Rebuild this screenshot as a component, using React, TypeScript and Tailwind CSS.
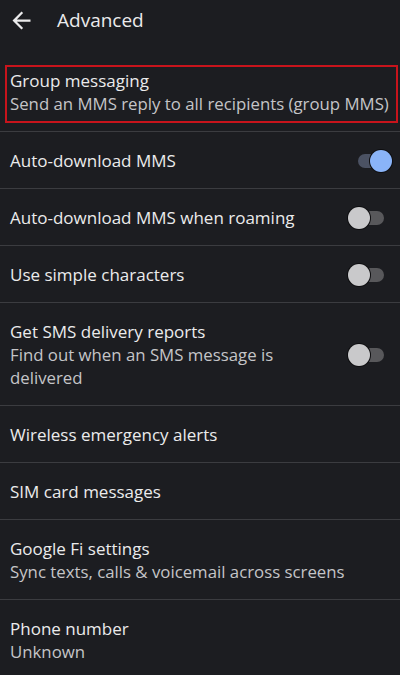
import { useState } from "react";

interface SettingItem {
  title: string;
  summary?: string;
  toggle?: boolean;
}

const items: SettingItem[] = [
  { title: "Auto-download MMS", toggle: true },
  { title: "Auto-download MMS when roaming", toggle: false },
  { title: "Use simple characters", toggle: false },
  {
    title: "Get SMS delivery reports",
    summary: "Find out when an SMS message is delivered",
    toggle: false,
  },
  { title: "Wireless emergency alerts" },
  { title: "SIM card messages" },
  {
    title: "Google Fi settings",
    summary: "Sync texts, calls & voicemail across screens",
  },
  { title: "Phone number", summary: "Unknown" },
];

function Toggle({ initial }: { initial: boolean }) {
  const [on, setOn] = useState(initial);

  return (
    <button
      onClick={() => setOn(!on)}
      className="relative w-[44px] h-[22px] shrink-0"
      aria-pressed={on}
    >
      <span
        className={`absolute left-[10px] top-[4px] w-[26px] h-[14px] rounded-full ${
          on ? "bg-[#4b5263]" : "bg-[#58585b]"
        }`}
      />
      <span
        className={`absolute top-0 w-[22px] h-[22px] rounded-full ring-1 ring-[#0e0e10] ${
          on ? "left-[22px] bg-[#8ab4f8]" : "left-0 bg-[#c9c9cb]"
        }`}
      />
    </button>
  );
}

export default function App() {
  return (
    <div
      className="w-[400px] min-h-[675px] bg-[#1c1d21] text-[#ebebec]"
      style={{ fontFamily: "'Open Sans', Roboto, sans-serif" }}
    >
      {/* Top bar */}
      <div className="h-10 flex items-center">
        <svg
          viewBox="0 0 24 24"
          className="w-[27px] h-[27px] ml-[8px] fill-[#ebebec]"
        >
          <path d="M20 11H7.83l5.59-5.59L12 4l-8 8 8 8 1.41-1.41L7.83 13H20v-2z" />
        </svg>
        <span className="ml-[22px] text-[19px] leading-none">Advanced</span>
      </div>

      {/* Group messaging, outlined */}
      <div className="pt-[25px] pb-[8px] pl-[5px] pr-[2px] border-b border-[#3b3c40]">
        <div className="border-2 border-[#c8141c] pl-[3px] pt-[2px] pb-[6px]">
          <div className="text-[17px] leading-[23px] font-medium">
            Group messaging
          </div>
          <div className="text-[16.8px] leading-[23px] text-[#c5c5c8] whitespace-nowrap">
            Send an MMS reply to all recipients (group MMS)
          </div>
        </div>
      </div>

      {items.map((item, index) => (
        <div
          key={index}
          className={`flex items-center pl-[10px] pr-[8px] pt-[17px] pb-[16px] ${
            index < items.length - 1 ? "border-b border-[#3b3c40]" : ""
          }`}
        >
          <div className="flex-1 min-w-0 pr-4">
            <div className="text-[17px] leading-[23px] font-medium">
              {item.title}
            </div>
            {item.summary && (
              <div className="text-[16.8px] leading-[23px] text-[#c5c5c8]">
                {item.summary}
              </div>
            )}
          </div>
          {item.toggle !== undefined && <Toggle initial={item.toggle} />}
        </div>
      ))}
    </div>
  );
}
